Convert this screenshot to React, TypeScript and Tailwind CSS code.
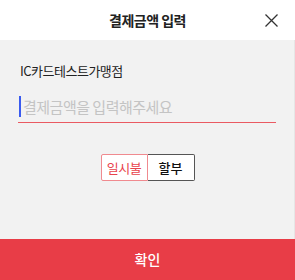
import React from "react";

export default function App() {
  const font = { fontFamily: '"Noto Sans CJK KR", "Noto Sans", sans-serif' };
  return (
    <div
      className="w-[295px] h-[280px] flex flex-col bg-[#f2f2f2] overflow-hidden"
      style={font}
    >
      {/* Header */}
      <div className="h-[40px] shrink-0 bg-white relative flex items-center justify-center">
        <h3 className="text-[14px] font-bold text-[#222] tracking-[-0.5px]">결제금액 입력</h3>
        <button className="absolute right-[17px] top-[14px] text-[#333]">
          <svg width="13" height="13" viewBox="0 0 13 13" fill="none" stroke="currentColor" strokeWidth="1.3">
            <path d="M0.5 0.5 L12.5 12.5 M12.5 0.5 L0.5 12.5" />
          </svg>
        </button>
      </div>

      {/* Body */}
      <div className="flex-1 flex flex-col px-[18px] pt-[22px] border-r border-[#e6e6e6]">
        <p className="pl-[2px] text-[13px] text-[#222] leading-[18px] tracking-[-0.5px]">IC카드테스트가맹점</p>

        <div className="mt-[12px] flex items-start pt-[4px] h-[31px] border-b border-[#ea5a62]">
          <div className="w-[2px] h-[21px] bg-[#3a5bef] ml-[1px]" />
          <input
            className="flex-1 h-[21px] bg-transparent outline-none pl-[2px] text-[15px] leading-[21px] text-[#333] placeholder:text-[#c4c4c4] tracking-[-0.5px]"
            placeholder="결제금액을 입력해주세요"
            style={font}
          />
        </div>

        <div className="mt-[31px] flex justify-center pl-[1px]">
          <button className="w-[47px] h-[27px] border border-[#f08a8f] rounded-l-[2px] bg-white text-[13px] text-[#e8434c] tracking-[-0.5px]">
            일시불
          </button>
          <button className="w-[47px] h-[27px] border border-l-0 border-[#555] rounded-r-[2px] bg-white text-[13px] font-medium text-[#111]">
            할부
          </button>
        </div>
      </div>

      {/* Confirm */}
      <button className="h-[41px] shrink-0 bg-[#e83d47] text-white text-[14px] font-medium">
        확인
      </button>
    </div>
  );
}
